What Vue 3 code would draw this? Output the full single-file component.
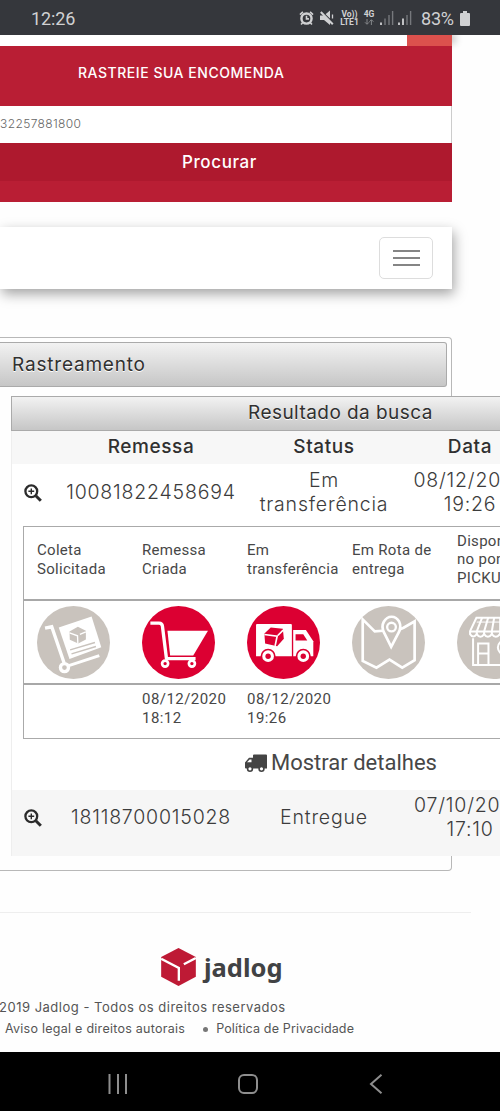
<script setup>
const steps = [
  { label: ['Coleta', 'Solicitada'], icon: 'trolley', active: false, when: [] },
  { label: ['Remessa', 'Criada'], icon: 'cart', active: true, when: ['08/12/2020', '18:12'] },
  { label: ['Em', 'transferência'], icon: 'truck', active: true, when: ['08/12/2020', '19:26'] },
  { label: ['Em Rota de', 'entrega'], icon: 'map', active: false, when: [] },
  { label: ['Disponível', 'no ponto', 'PICKUP'], icon: 'store', active: false, when: [] },
]
</script>

<template>
  <div class="screen">
    <header class="status">
      <span class="clock">12:26</span>
      <div class="indicators">
        <svg class="alarm" viewBox="0 0 16 16">
          <circle cx="8" cy="8.6" r="5.4" fill="none" stroke="#d0d1d3" stroke-width="2.6" />
          <path d="M8 5.5v3.4h2.6M1 4.4L4.200 1.500M15 4.400L11.800 1.500M3.800 13l-1.600 2M12.200 13l1.600 2" fill="none" stroke="#d0d1d3" stroke-width="1.7" />
        </svg>
        <svg class="mute" viewBox="0 0 14 16">
          <path d="M0 5.500h4l6-5v14.500l-6-5H0z" fill="#d0d1d3" />
          <path d="M.5 .5l13 13" stroke="#35373c" stroke-width="2" />
          <path d="M.8 2l12 12.200" stroke="#d0d1d3" stroke-width="2" />
          <path d="M12.500 4.500v4" stroke="#d0d1d3" stroke-width="1.300" />
        </svg>
        <div class="tiny volte"><span>Vo))</span><span>LTE1</span></div>
        <div class="tiny net">
          <span>4G</span>
          <svg viewBox="0 0 10 6"><path d="M3 0v5M1 3.3l2 2 2-2M7.4 6V1M5.4 2.7l2-2 2 2" fill="none" stroke="#85878a" /></svg>
        </div>
        <svg class="bars" viewBox="0 0 14 14">
          <path d="M1 11.5v2.5" stroke="#d0d1d3" stroke-width="1.8" />
          <path d="M5 7.5V14M9 4V14M12.6 0V14" stroke="#76787c" stroke-width="1.4" />
        </svg>
        <svg class="bars second" viewBox="0 0 14 14">
          <path d="M1 11.5v2.5M5 7.5V14" stroke="#d0d1d3" stroke-width="1.8" />
          <path d="M9 4V14M12.6 0V14" stroke="#76787c" stroke-width="1.4" />
        </svg>
        <span class="percent">83%</span>
        <svg class="battery" viewBox="0 0 10 15"><path d="M3 0h4v2h2a1 1 0 0 1 1 1v11a1 1 0 0 1-1 1H1a1 1 0 0 1-1-1V3a1 1 0 0 1 1-1h2z" fill="#d0d1d3" /></svg>
      </div>
    </header>

    <main>
      <section class="search">
        <div class="tab"><i></i></div>
        <h1><span class="t-title">RASTREIE SUA ENCOMENDA</span></h1>
        <div class="field"><span class="t-field">32257881800</span></div>
        <button class="go"><span class="t-go">Procurar</span></button>
        <div class="pad"></div>
      </section>

      <nav class="navbar">
        <button class="burger"><i></i><i></i><i></i></button>
      </nav>

      <section class="panel">
        <h2 class="panel-title"><span>Rastreamento</span></h2>
        <div class="results">
          <div class="caption"><span>Resultado da busca</span></div>
          <div class="row head">
            <div></div>
            <div><span>Remessa</span></div>
            <div><span>Status</span></div>
            <div><span>Data</span></div>
          </div>
          <div class="row first">
            <div class="lens">
              <svg viewBox="0 0 18 18"><circle cx="7.3" cy="7.3" r="5.9" fill="none" stroke="#2b2b2b" stroke-width="2.3" /><path d="M11.8 11.8l5 5" stroke="#2b2b2b" stroke-width="3" /><path d="M7.3 4.4v5.8M4.4 7.3h5.8" stroke="#2b2b2b" stroke-width="1.4" /></svg>
            </div>
            <div><span>10081822458694</span></div>
            <div><span>Em<br />transferência</span></div>
            <div><span>08/12/2020<br />19:26</span></div>
          </div>

          <div class="track">
            <div class="line labels">
              <div v-for="s in steps" :key="s.icon"><p v-for="t in s.label" :key="t">{{ t }}</p></div>
            </div>
            <div class="line icons">
              <div v-for="s in steps" :key="s.icon">
                <svg class="step" viewBox="0 0 218 218" fill="none" stroke="#fff">
                  <circle cx="109" cy="109" r="109" stroke="none" :fill="s.active ? '#dc0032' : '#c9c3bd'" />
                  <g v-if="s.icon === 'trolley'">
                    <path d="M24 66L44 62L81 170" stroke-width="10" />
                    <path d="M65 64L163 31L192 123L97 158Z" fill="#fff" stroke="none" />
                    <circle cx="82" cy="184" r="12" stroke-width="10" />
                    <path d="M95 178L186 148" stroke-width="9" />
                    <path d="M97 76l25-14 24 12 0 26-23 12-25-11z" fill="#c9c3bd" stroke="none" />
                    <path d="M97 80l24 9 1 24M128 85l18-8" stroke-width="4" />
                    <path d="M99 131L173 109M103 143L176 121" stroke="#c9c3bd" stroke-width="4.5" />
                  </g>
                  <g v-else-if="s.icon === 'cart'">
                    <path d="M25 51H51Q60 51 61 60L73 157H160" stroke-width="10" stroke-linejoin="round" />
                    <path d="M76 74H197L153 148H84Z" fill="#fff" stroke="none" />
                    <circle cx="69" cy="172" r="9" stroke-width="8" />
                    <circle cx="149" cy="172" r="9" stroke-width="8" />
                  </g>
                  <g v-else-if="s.icon === 'truck'">
                    <path d="M30 54H131Q134 54 134 57V150H27V57Q27 54 30 54Z" fill="#fff" stroke="none" />
                    <path d="M138 72H176L198 105V150H138Z" fill="#fff" stroke="none" />
                    <path d="M145 84H168L180 103H145Z" fill="#dc0032" stroke="none" />
                    <g stroke="#dc0032" stroke-width="5"><circle cx="63" cy="150" r="20" fill="#fff" /><circle cx="168" cy="150" r="20" fill="#fff" /></g>
                    <g fill="#dc0032" stroke="none"><circle cx="63" cy="150" r="8" /><circle cx="168" cy="150" r="8" /></g>
                    <path d="M52 82L71 64 107 68 110 98 90 120 54 112Z" fill="#dc0032" stroke="none" />
                    <path d="M52 85L90 90 84 119M92 88L108 72" stroke-width="5" />
                  </g>
                  <g v-else-if="s.icon === 'map'">
                    <path d="M93 74L68 76 32 40V164L73 184 112 160 150 184 187 162V46L154 65L142 70" stroke-width="8" />
                    <path d="M117 122L97 82Q86 63 95 47Q104 32 118 32Q133 32 141 47Q149 63 138 82Z" stroke-width="8" />
                    <circle cx="118" cy="63" r="13" stroke-width="7" />
                  </g>
                  <g v-else stroke-width="6">
                    <path d="M58 35H180L198 75V84Q188 100 176 84Q164 100 152 84Q140 100 128 84Q116 100 104 84Q92 100 81 84Q70 100 59 84Q48 98 39 84V75Z" />
                    <path d="M39 76H198M75 35L59 76V84M93 35L81 76V84M111 35L104 76V84M129 35V84M48 96V176H190M63 176V112H94V176M63 142H94" />
                    <path d="M59 48H130" stroke-width="3" />
                    <circle cx="142" cy="124" r="20" />
                  </g>
                </svg>
              </div>
            </div>
            <div class="line dates">
              <div v-for="s in steps" :key="s.icon"><p v-for="t in s.when" :key="t">{{ t }}</p></div>
            </div>
          </div>

          <div class="more">
            <svg viewBox="0 0 22 18"><path d="M8 1.5Q8 .5 9 .5H21Q22 .5 22 1.5V14.5H1Q0 14.5 0 13.5V8.5L4 3.8H8zM2 8.3h4.5V5.4H4.6z" fill="#444" fill-rule="evenodd" /><g fill="#fff" stroke="#444" stroke-width="1.6"><circle cx="5" cy="14.8" r="2.4" /><circle cx="16.5" cy="14.8" r="2.4" /></g></svg>
            <span>Mostrar detalhes</span>
          </div>

          <div class="row last">
            <div class="lens">
              <svg viewBox="0 0 18 18"><circle cx="7.3" cy="7.3" r="5.9" fill="none" stroke="#2b2b2b" stroke-width="2.3" /><path d="M11.8 11.8l5 5" stroke="#2b2b2b" stroke-width="3" /><path d="M7.3 4.4v5.8M4.4 7.3h5.8" stroke="#2b2b2b" stroke-width="1.4" /></svg>
            </div>
            <div><span>18118700015028</span></div>
            <div><span>Entregue</span></div>
            <div><span>07/10/2020<br />17:10</span></div>
          </div>
        </div>
      </section>

      <footer>
        <div class="brand">
          <svg viewBox="0 0 104 114"><path d="M52 0L104 27V86L52 114 0 86V27Z" fill="#be1a35" /><path d="M0 32L53 60V98M68 49L104 30" fill="none" stroke="#fff" stroke-width="7" /></svg>
          <span>jadlog</span>
        </div>
        <p class="copy"><span>2019 Jadlog - Todos os direitos reservados</span></p>
        <p class="links"><span class="l1">Aviso legal e direitos autorais</span><i></i><span class="l2">Política de Privacidade</span></p>
      </footer>
    </main>

    <div class="keys">
      <svg viewBox="0 0 20 20"><path d="M1.500 0V20M10 0V20M18 0V20" stroke="#8e8e8e" stroke-width="2" /></svg>
      <svg viewBox="0 0 20 20"><rect x="1" y="1" width="18" height="18" rx="5" fill="none" stroke="#8e8e8e" stroke-width="2" /></svg>
      <svg viewBox="0 0 20 20"><path d="M13.500 .8L3 10l10.500 9.200" fill="none" stroke="#8e8e8e" stroke-width="2" /></svg>
    </div>
  </div>
</template>

<style>
body { background: #fff; overflow: hidden; }
</style>

<style scoped>
* { box-sizing: border-box; }
h1, h2, p { margin: 0; font-weight: 400; }
button { border: 0; padding: 0; font: inherit; display: block; }
span { white-space: nowrap; }
.screen { width: 500px; height: 1111px; overflow: hidden; display: flex; flex-direction: column; background: #fefefe; font-family: Inter, "Open Sans", sans-serif; color: #3c3c3c; }

.status { height: 35px; flex: none; background: #35373c; color: #d0d1d3; font-family: Roboto, sans-serif; display: flex; align-items: center; justify-content: space-between; padding: 1px 30px 0 31px; position: relative; z-index: 1; }
.clock { font-size: 18px; letter-spacing: -.1px; }
.indicators { display: flex; align-items: center; }
.alarm { width: 15px; height: 16px; margin-right: 6px; }
.mute { width: 14px; height: 16px; margin-right: 6px; }
.tiny { display: flex; flex-direction: column; font-size: 8.500px; line-height: 8px; font-weight: 700; align-items: center; }
.volte { width: 19px; margin-right: 4px; }
.net { width: 12px; margin-right: 5px; }
.net svg { width: 10px; height: 6px; margin: 1px 0; }
.bars { width: 14px; height: 14px; margin-right: 4px; }
.bars.second { margin-right: 9px; }
.percent { font-size: 18px; width: 35px; letter-spacing: -.2px; }
.battery { width: 10px; height: 15px; margin-left: 4px; }

main { flex: 1; display: flex; flex-direction: column; align-items: flex-start; }
.search { width: 452px; color: #fff; }
.tab { height: 11px; background: #fff; display: flex; justify-content: flex-end; box-shadow: 4px -2px 7px rgba(0,0,0,.2); }
.tab i { width: 45px; background: #dc514d; }
.search h1 { height: 60px; background: #b91e34; padding: 15px 0 0 78px; font-size: 14px; line-height: 24px; position: relative; }
.t-title { letter-spacing: .53px; font-weight: 500; }
.field { height: 37px; background: #fff; border-right: 1px solid #ccc; font-size: 12px; line-height: 35px; color: #666; }
.t-field { font-weight: 300; letter-spacing: .38px; }
.go { height: 38px; width: 100%; background: #ae192e; color: #fff; font-size: 17px; line-height: 36px; text-align: left; padding-left: 182px; font-weight: 500; letter-spacing: .6px; }
.pad { height: 21px; background: #b91e34; }

.navbar { margin-top: 25px; width: 452px; height: 62px; background: #fff; box-shadow: 2px 5px 12px rgba(0,0,0,.36); display: flex; justify-content: flex-end; padding: 10px 19px 0 0; }
.burger { width: 54px; height: 42px; border: 1px solid #ddd; border-radius: 5px; background: #fff; display: flex; flex-direction: column; gap: 5px; align-items: center; justify-content: center; }
.burger i { width: 27px; height: 2px; background: #858585; }

.panel { margin-top: 48px; width: 452px; height: 534px; border: 1px solid #b8b8b8; border-left: 0; border-radius: 0 4px 4px 0; padding-top: 4px; }
.panel-title { width: 447px; height: 45px; border: 1px solid #aaa; border-left: 0; border-radius: 0 3px 3px 0; background: linear-gradient(#f2f2f2, #c6c6c6); font-size: 19px; line-height: 44px; padding-left: 12px; letter-spacing: .8px; }
.results { margin: 9px 0 0 11px; width: 531px; background: #fff; border-left: 1px solid #eee; }
.caption { height: 35px; margin-left: -1px; border: 1px solid #aaa; background: linear-gradient(#f2f2f2, #c6c6c6); line-height: 31px; font-size: 19px; padding-left: 236px; letter-spacing: .45px; }
.panel-title, .caption { color: #303030; font-weight: 400; text-shadow: 0 1px 0 #fff; }
.row { display: grid; grid-template-columns: 41px 196px 150px 142px; align-items: center; text-align: center; font-size: 19.500px; line-height: 24px; font-weight: 300; letter-spacing: .8px; }
.first, .last { padding-bottom: 2px; }
.head { height: 33px; background: #f7f7f7; font-weight: 500; color: #303030; font-size: 19px; letter-spacing: .6px; padding-bottom: 2px; }
.first { height: 57px; }
.last { height: 66px; background: #f6f6f6; padding-bottom: 13px; }
.lens svg { width: 18px; height: 18px; display: block; margin: 3px 0 0 12px; }

.track { margin: 5px 0 0 11px; height: 213px; width: 560px; border: 1px solid #aaa; font-family: Roboto, sans-serif; font-size: 15px; line-height: 18.500px; color: #474747; letter-spacing: .3px; }
.line { display: grid; grid-template-columns: repeat(5, 105px); padding-left: 13px; border-bottom: 2px solid #a8a8a8; }
.line p { white-space: nowrap; }
.labels { height: 74px; align-items: center; padding-bottom: 7px; }
.icons { height: 84px; padding-top: 4.500px; }
.step { width: 73px; height: 73px; display: block; }
.dates { border: 0; padding-top: 5px; letter-spacing: .45px; }

.more { height: 51px; display: flex; align-items: center; padding: 0 0 4px 233px; font-family: Roboto, sans-serif; font-size: 22px; color: #474747; }
.more svg { width: 22px; height: 18px; margin-right: 4px; }

footer { width: 471px; margin-top: 41px; border-top: 1px solid #eee; padding-top: 34px; color: #555; font-weight: 300; }
.brand { height: 40px; padding-left: 161px; display: flex; align-items: center; color: #414244; font: 700 25.500px/36px "Noto Sans", sans-serif; }
.brand svg { width: 35px; height: 38px; margin-right: 8px; }
.copy { font-size: 13px; line-height: 20px; margin: 10px 0 0 -1px; letter-spacing: .5px; }
.links { display: flex; align-items: center; font-size: 12.500px; line-height: 20px; padding-left: 5px; margin-top: 2px; }
.l1 { letter-spacing: .26px; }
.l2 { letter-spacing: .15px; }
.links i { width: 5px; height: 5px; border-radius: 50%; background: #777; margin: 0 8px 0 18px; }

.keys { height: 59px; flex: none; background: #000; display: flex; align-items: center; gap: 110px; padding: 4px 0 0 108px; position: relative; z-index: 1; }
.keys svg { width: 20px; height: 20px; }
</style>
